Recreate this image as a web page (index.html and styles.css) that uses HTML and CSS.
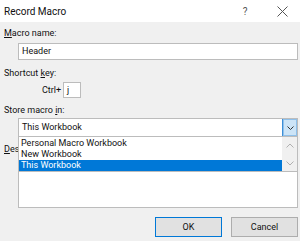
FILE: index.html
```html
<!DOCTYPE html>
<html lang="en">
<head>
    <meta charset="UTF-8">
    <title>Record Macro</title>
    <link rel="stylesheet" href="styles.css">
</head>
<body>
    <div class="titlebar">
        <span class="title">Record Macro</span>
        <span class="help">?</span>
        <span class="close">
            <svg width="11" height="11" viewBox="0 0 11 11"><path d="M0.5 0.5 L10.5 10.5 M10.5 0.5 L0.5 10.5" stroke="#555" stroke-width="1" fill="none"/></svg>
        </span>
    </div>

    <div class="content">
        <div class="label"><u>M</u>acro name:</div>
        <div class="textbox name-box">Header</div>

        <div class="label shortcut-label">Shortcut <u>k</u>ey:</div>
        <div class="ctrl-row">
            <span class="ctrl">Ctrl+</span>
            <div class="textbox key-box">j</div>
        </div>

        <div class="label store-label">Store macro <u>i</u>n:</div>
        <div class="combo">
            <div class="combo-value">This Workbook</div>
            <div class="combo-btn">
                <svg width="7" height="4" viewBox="0 0 7 4"><path d="M0.5 0.5 L3.5 3.5 L6.5 0.5" stroke="#333" fill="none"/></svg>
            </div>
            <!-- open dropdown, drawn over the description field -->
            <div class="listbox">
                <div class="options">
                    <div class="option">Personal Macro Workbook</div>
                    <div class="option">New Workbook</div>
                    <div class="option selected">This Workbook</div>
                </div>
                <div class="scrollbar">
                    <svg width="8" height="5" viewBox="0 0 8 5"><path d="M0.5 4.5 L4 1 L7.5 4.5" stroke="#b0b0b0" fill="none"/></svg>
                    <svg width="8" height="5" viewBox="0 0 8 5"><path d="M0.5 0.5 L4 4 L7.5 0.5" stroke="#b0b0b0" fill="none"/></svg>
                </div>
            </div>
        </div>

        <div class="label desc-label"><u>D</u>escription:</div>
        <div class="textbox desc-box"></div>

        <div class="buttons">
            <button class="btn default">OK</button>
            <button class="btn">Cancel</button>
        </div>
    </div>
</body>
</html>
```

FILE: styles.css
```css
body { margin: 0; width: 300px; height: 241px; overflow: hidden; background: #f0f0f0; font-family: Roboto, "Liberation Sans", sans-serif; font-size: 9px; color: #111; }
.titlebar { height: 22px; background: #fff; display: flex; align-items: center; padding-left: 4px; }
.title { flex: 1; font-size: 10px; }
.help { width: 30px; color: #555; font-size: 10px; text-align: center; margin-right: 7px; }
.close { width: 30px; display: flex; justify-content: center; margin-right: 3px; }
.content { padding: 0 2px 0 4px; }
.label { height: 12px; line-height: 12px; }
.label:first-child { margin-top: 5px; }
.textbox { background: #fff; border: 1px solid #bcbcbc; box-sizing: border-box; padding-left: 3px; }
.name-box { margin: 4px 0 0 14px; height: 17px; line-height: 15px; }
.shortcut-label { margin-top: 7px; }
.ctrl-row { display: flex; align-items: center; margin-top: 3px; padding-left: 38px; }
.ctrl { width: 21px; }
.key-box { width: 18px; height: 16px; line-height: 14px; }
.store-label { margin-top: 6px; }
.combo { position: relative; margin: 2px 0 0 14px; height: 19px; background: #fff; border: 1px solid #bcbcbc; box-sizing: border-box; display: flex; }
.combo-value { flex: 1; padding-left: 3px; line-height: 17px; }
.combo-btn { width: 14px; background: #cce4f7; border-left: 1px solid #3c8fd8; display: flex; align-items: center; justify-content: center; box-shadow: inset 0 0 0 1px #8fc0ea; }
.listbox { position: absolute; top: 17px; left: -1px; right: -1px; height: 36px; background: #fff; border: 1px solid #bcbcbc; box-sizing: border-box; display: flex; z-index: 2; }
.options { flex: 1; }
.option { height: 11px; line-height: 11px; padding-left: 2px; }
.option:first-child { margin-top: 1px; }
.selected { background: #0078d7; color: #fff; }
.scrollbar { width: 15px; background: #f0f0f0; display: flex; flex-direction: column; align-items: center; justify-content: space-between; padding: 6px 0 5px; box-sizing: border-box; }
.desc-label { margin-top: 6px; }
.desc-box { margin: 3px 0 0 14px; height: 50px; }
.buttons { display: flex; justify-content: flex-end; gap: 9px; margin-top: 9px; }
.btn { width: 67px; height: 20px; background: #e1e1e1; border: 1px solid #adadad; font-family: Roboto, "Liberation Sans", sans-serif; font-size: 9px; color: #111; padding: 0; }
.default { border-color: #0078d7; }
```
